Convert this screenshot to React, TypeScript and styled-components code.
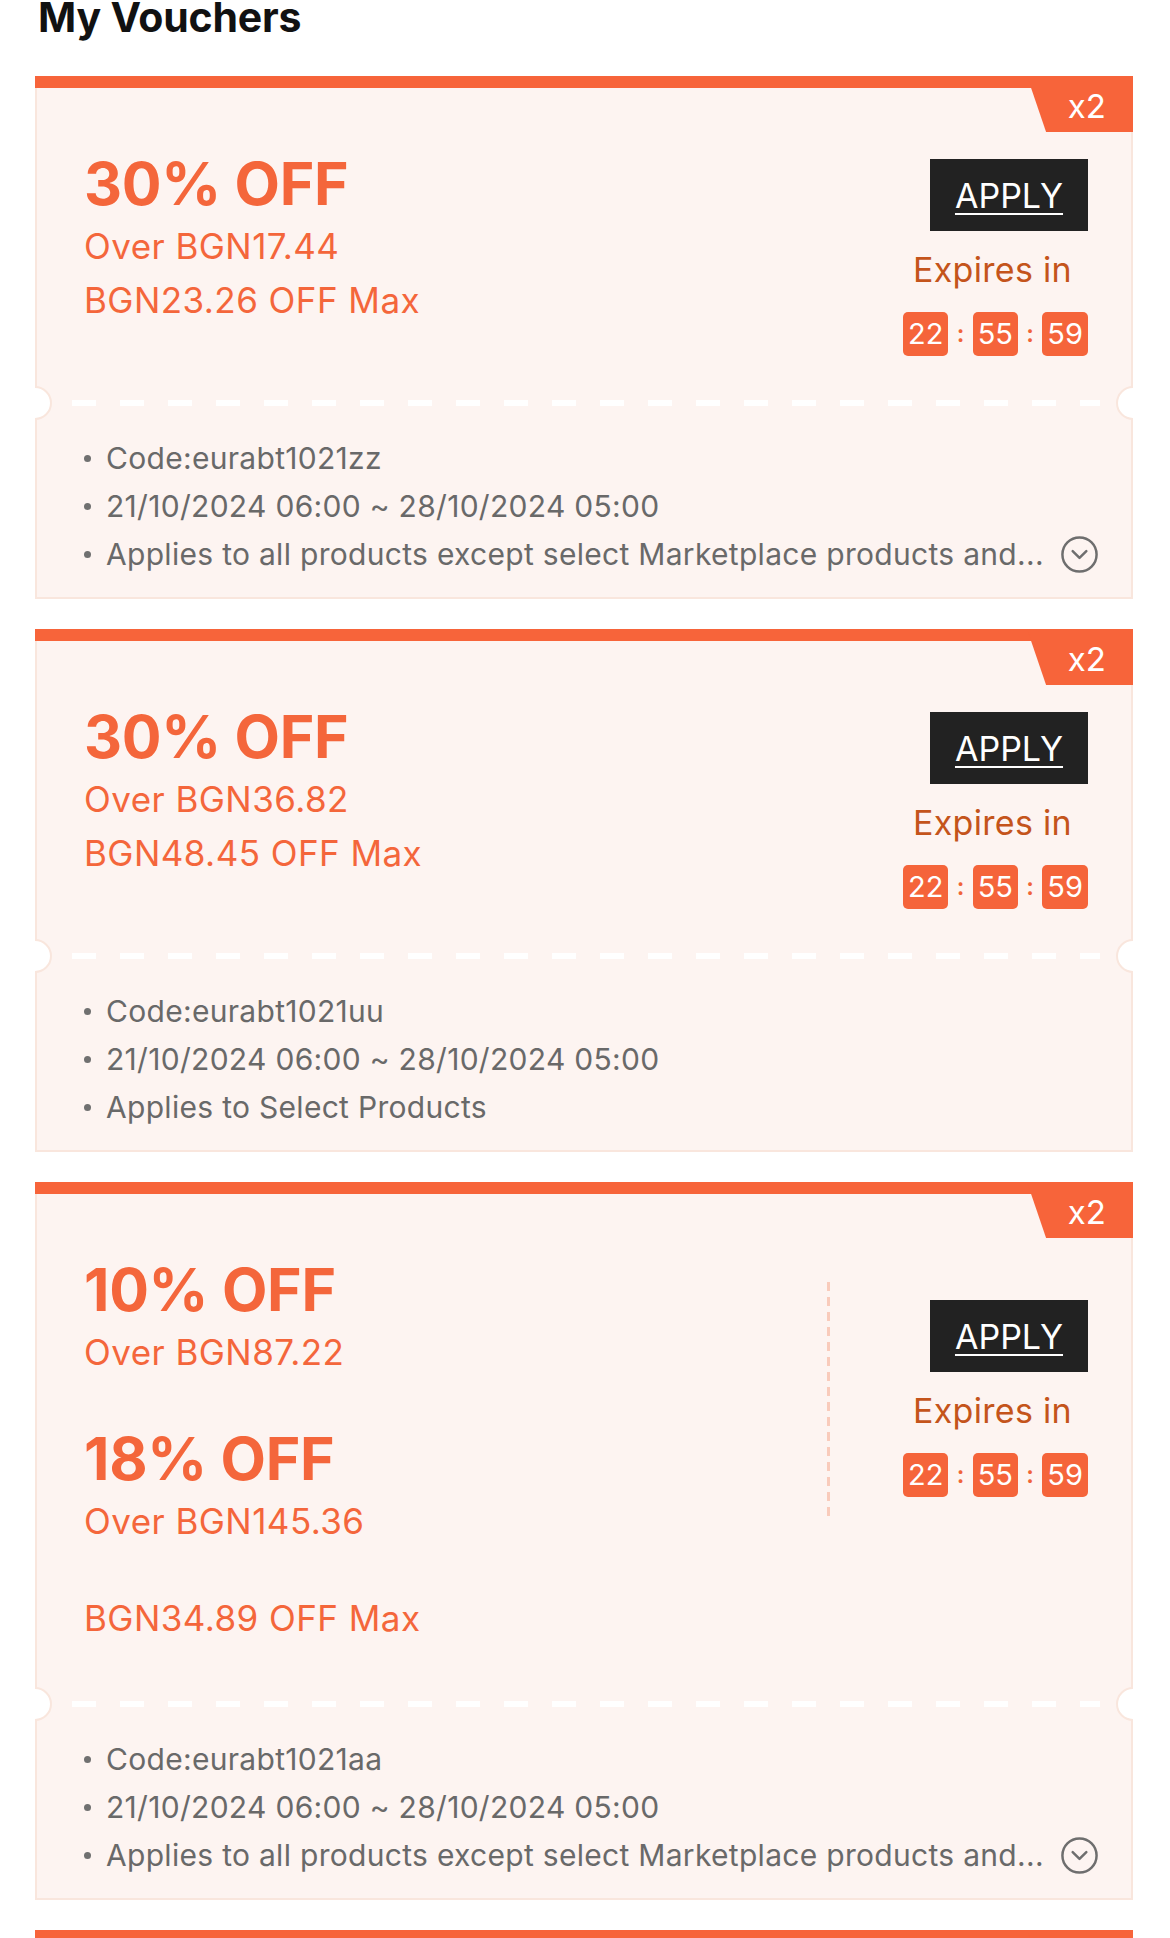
import styled, { createGlobalStyle } from 'styled-components';
import { CircleChevronDown } from 'lucide-react';

const GlobalStyle = createGlobalStyle`
  html, body {
    margin: 0;
    padding: 0;
    background: #ffffff;
  }
  body {
    font-family: Inter, "Noto Sans", "Liberation Sans", sans-serif;
    -webkit-font-smoothing: antialiased;
  }
`;

const Page = styled.div`
  height: 1938px;
  overflow: hidden;
  padding: 0 37px 0 35px;
`;

const Title = styled.h1`
  margin: -3px 0 0 3px;
  font-size: 41px;
  line-height: 40px;
  font-weight: 700;
  color: #111;
  letter-spacing: -0.2px;
`;

const List = styled.div`
  margin-top: 39px;
  display: flex;
  flex-direction: column;
  gap: 30px;
`;

const Card = styled.div`
  position: relative;
  overflow: hidden;
  background: #fdf4f1;
  box-shadow: inset 0 0 0 2px #f9e6dd;
`;

const Bar = styled.div`
  height: 12px;
  background: #f7643a;
`;

const Badge = styled.div`
  position: absolute;
  top: 0;
  right: 0;
  width: 106px;
  height: 56px;
  background: #f7643a;
  clip-path: polygon(0 0, 100% 0, 100% 100%, 18% 100%);
  color: #fff;
  font-size: 33px;
  line-height: 56px;
  text-align: right;
  padding-right: 27px;
  box-sizing: border-box;
  padding-top: 2px;
`;

const Main = styled.div`
  padding: 61px 45px 44px 49px;
  display: flex;
  flex-direction: column;
`;

const Row = styled.div<{ $center?: boolean }>`
  display: flex;
  align-items: ${(p) => (p.$center ? 'center' : 'flex-start')};
`;

const Tiers = styled.div`
  flex: 1;
  display: flex;
  flex-direction: column;
  gap: 45px;
`;

const Tier = styled.div`
  display: flex;
  flex-direction: column;
`;

const Off = styled.div`
  font-size: 59px;
  line-height: 70px;
  font-weight: 700;
  color: #f4663b;
  letter-spacing: -0.3px;
`;

const Line = styled.div<{ $gapTop?: number; $gapBottom?: number }>`
  font-size: 35px;
  line-height: 54px;
  color: #f4663b;
  letter-spacing: 0.45px;
  margin-top: ${(p) => p.$gapTop ?? 0}px;
  margin-bottom: ${(p) => p.$gapBottom ?? 0}px;
`;

const VDash = styled.div`
  width: 3px;
  height: 240px;
  margin-right: 73px;
  background: repeating-linear-gradient(to bottom, #f9cbbb 0 9px, transparent 9px 15px);
`;

const Side = styled.div<{ $offset: number }>`
  width: 185px;
  margin-top: ${(p) => p.$offset}px;
  display: flex;
  flex-direction: column;
  align-items: center;
`;

const ApplyButton = styled.button`
  align-self: flex-end;
  width: 158px;
  height: 72px;
  border: none;
  background: #222;
  color: #fff;
  font-family: Inter, "Noto Sans", sans-serif;
  font-size: 34px;
  text-decoration: underline;
  text-underline-offset: 5px;
  text-decoration-thickness: 2px;
  padding: 0;
  cursor: pointer;
`;

const Expires = styled.div`
  margin-top: 14px;
  font-size: 34px;
  line-height: 50px;
  color: #c4541b;
  letter-spacing: 0.3px;
  margin-right: 6px;
`;

const Timer = styled.div`
  margin-top: 17px;
  display: flex;
  align-items: center;
  align-self: stretch;
  justify-content: space-between;
`;

const TimeBox = styled.span`
  height: 44px;
  padding: 0 5px;
  border-radius: 5px;
  background: #f5643a;
  color: #fff;
  font-size: 29px;
  line-height: 44px;
`;

const Colon = styled.span`
  color: #f0643a;
  font-size: 24px;
  font-weight: 600;
  line-height: 40px;
`;

const Perforation = styled.div`
  position: relative;
  height: 6px;
  padding: 0 33px 0 37px;
`;

const Dashes = styled.div`
  height: 100%;
  background: repeating-linear-gradient(to right, #ffffff 0 24px, transparent 24px 48px);
`;

const Notch = styled.span<{ $side: 'left' | 'right' }>`
  position: absolute;
  top: 50%;
  ${(p) => p.$side}: -17px;
  width: 34px;
  height: 34px;
  margin-top: -17px;
  border-radius: 50%;
  background: #fff;
  box-sizing: border-box;
  border: 2px solid #f9e6dd;
`;

const Details = styled.ul`
  list-style: none;
  margin: 0;
  padding: 28px 33px 21px 49px;
`;

const Item = styled.li`
  display: flex;
  align-items: center;
  height: 48px;
  font-size: 30px;
  color: #696969;
  letter-spacing: 0.3px;
`;

const Dot = styled.span`
  flex: none;
  width: 7px;
  height: 7px;
  border-radius: 50%;
  background: #707070;
  margin-right: 15px;
`;

const ItemText = styled.span`
  flex: 1;
  min-width: 0;
  white-space: nowrap;
  overflow: hidden;
  text-overflow: ellipsis;
`;

const Expand = styled.span`
  flex: none;
  display: flex;
  margin-left: 14px;
  color: #6e6e6e;
`;

type Voucher = {
  tiers: { off: string; over: string }[];
  max: string;
  code: string;
  scope: string;
  expandable: boolean;
};

const vouchers: Voucher[] = [
  {
    tiers: [{ off: '30% OFF', over: 'Over BGN17.44' }],
    max: 'BGN23.26 OFF Max',
    code: 'eurabt1021zz',
    scope: 'Applies to all products except select Marketplace products and...',
    expandable: true,
  },
  {
    tiers: [{ off: '30% OFF', over: 'Over BGN36.82' }],
    max: 'BGN48.45 OFF Max',
    code: 'eurabt1021uu',
    scope: 'Applies to Select Products',
    expandable: false,
  },
  {
    tiers: [
      { off: '10% OFF', over: 'Over BGN87.22' },
      { off: '18% OFF', over: 'Over BGN145.36' },
    ],
    max: 'BGN34.89 OFF Max',
    code: 'eurabt1021aa',
    scope: 'Applies to all products except select Marketplace products and...',
    expandable: true,
  },
  {
    tiers: [{ off: '20% OFF', over: 'Over BGN29.07' }],
    max: 'BGN19.38 OFF Max',
    code: 'eurabt1021bb',
    scope: 'Applies to Select Products',
    expandable: false,
  },
];

function Countdown({ offset }: { offset: number }) {
  return (
    <Side $offset={offset}>
      <ApplyButton>APPLY</ApplyButton>
      <Expires>Expires in</Expires>
      <Timer>
        <TimeBox>22</TimeBox>
        <Colon>:</Colon>
        <TimeBox>55</TimeBox>
        <Colon>:</Colon>
        <TimeBox>59</TimeBox>
      </Timer>
    </Side>
  );
}

function VoucherCard({ v }: { v: Voucher }) {
  const tiered = v.tiers.length > 1;
  return (
    <Card>
      <Bar />
      <Badge>x2</Badge>
      <Main>
        {tiered ? (
          <>
            <Row $center>
              <Tiers>
                {v.tiers.map((t) => (
                  <Tier key={t.off}>
                    <Off>{t.off}</Off>
                    <Line>{t.over}</Line>
                  </Tier>
                ))}
              </Tiers>
              <VDash />
              <Countdown offset={-6} />
            </Row>
            <Line $gapTop={43} $gapBottom={12}>
              {v.max}
            </Line>
          </>
        ) : (
          <Row>
            <Tier style={{ flex: 1 }}>
              <Off>{v.tiers[0].off}</Off>
              <Line>{v.tiers[0].over}</Line>
              <Line>{v.max}</Line>
            </Tier>
            <Countdown offset={10} />
          </Row>
        )}
      </Main>
      <Perforation>
        <Dashes />
        <Notch $side="left" />
        <Notch $side="right" />
      </Perforation>
      <Details>
        <Item>
          <Dot />
          <ItemText>Code:{v.code}</ItemText>
        </Item>
        <Item>
          <Dot />
          <ItemText>21/10/2024 06:00 ~ 28/10/2024 05:00</ItemText>
        </Item>
        <Item>
          <Dot />
          <ItemText>{v.scope}</ItemText>
          {v.expandable && (
            <Expand>
              <CircleChevronDown size={41} strokeWidth={1.45} />
            </Expand>
          )}
        </Item>
      </Details>
    </Card>
  );
}

function App() {
  return (
    <Page>
      <GlobalStyle />
      <Title>My Vouchers</Title>
      <List>
        {vouchers.map((v) => (
          <VoucherCard key={v.code} v={v} />
        ))}
      </List>
    </Page>
  );
}

export default App;
